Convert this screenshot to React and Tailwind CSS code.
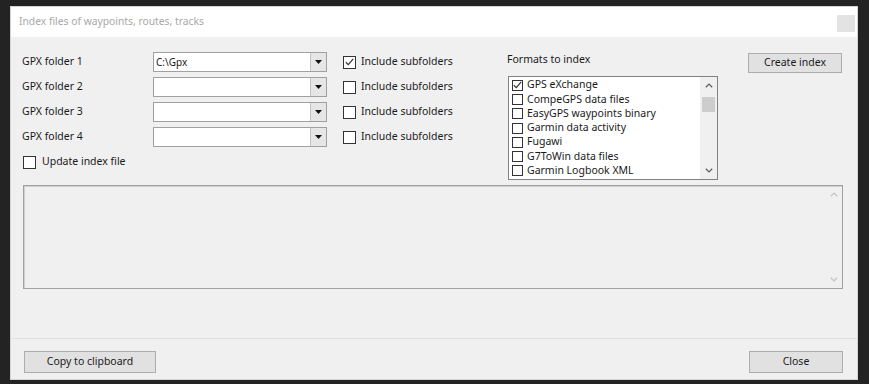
const formats = [
  { name: 'GPS eXchange', checked: true },
  { name: 'CompeGPS data files' },
  { name: 'EasyGPS waypoints binary' },
  { name: 'Garmin data activity' },
  { name: 'Fugawi' },
  { name: 'G7ToWin data files' },
  { name: 'Garmin Logbook XML' },
];

const CheckBox = ({ checked, size = 'w-[13px] h-[13px]' }) => (
  <span className={`${size} shrink-0 border border-[#333333] bg-white flex items-center justify-center`}>
    {checked && (
      <svg width="9" height="8" viewBox="0 0 9 8">
        <path d="M0.8 4.2 L3.3 6.6 L8.2 0.9" fill="none" stroke="#333333" strokeWidth="1.2" />
      </svg>
    )}
  </span>
);

const Chevron = ({ up = true, color = '#606060' }) => (
  <svg width="8" height="5" viewBox="0 0 8 5">
    <path d={up ? 'M0.8 4.3 L4 1.1 L7.2 4.3' : 'M0.8 0.7 L4 3.9 L7.2 0.7'} fill="none" stroke={color} strokeWidth="1.3" />
  </svg>
);

const Combo = ({ value }) => (
  <div className="flex h-[20px] w-[174px] border border-[#a0a0a0] bg-white">
    <div className="flex-1 flex items-center px-[2px] text-[10px]">{value}</div>
    <div className="w-[16px] border-l border-[#c4c4c4] bg-[#e6e6e6] flex items-center justify-center">
      <svg width="7" height="4" viewBox="0 0 7 4">
        <path d="M0 0 H7 L3.5 4 Z" fill="#111111" />
      </svg>
    </div>
  </div>
);

const Button = ({ children, width }) => (
  <div className={`${width} h-full border border-[#adadad] bg-[#e1e1e1] flex items-center justify-center text-[#1a1a1a]`}>
    {children}
  </div>
);

const App = () => {
  return (
    <div className="w-[869px] h-[384px] bg-[#232323] pt-[6px] pl-[10px] pr-[11px] pb-[4px] font-['Noto_Sans',sans-serif] text-[10.5px] text-[#1a1a1a]">
      <div className="h-full flex flex-col border border-[#d4d4d4] bg-white">
        {/* Title bar */}
        <div className="h-[30px] flex items-start justify-between pl-[8px] pr-[2px]">
          <span className="mt-[7px] text-[10.3px] text-[#a8a8a8]">Index files of waypoints, routes, tracks</span>
          <span className="mt-[8px] w-[18px] h-[17px] bg-[#e3e3e3]" />
        </div>

        {/* Body */}
        <div className="flex-1 flex flex-col bg-[#f0f0f0]">
          <div className="flex pt-[15px] pl-[11px]">
            {/* Folders */}
            <div className="w-[305px] flex flex-col gap-[5px]">
              {['C:\\Gpx', '', '', ''].map((v, i) => (
                <div key={i} className="h-[20px] flex items-center">
                  <span className="w-[131px]">GPX folder {i + 1}</span>
                  <Combo value={v} />
                </div>
              ))}
              <div className="h-[16px] mt-[2px] flex items-center gap-[6px] pl-[1px]">
                <CheckBox />
                <span>Update index file</span>
              </div>
            </div>

            {/* Include subfolders */}
            <div className="w-[164px] ml-[16px] flex flex-col gap-[5px]">
              {[true, false, false, false].map((c, i) => (
                <div key={i} className="h-[20px] flex items-center gap-[5px]">
                  <CheckBox checked={c} />
                  <span>Include subfolders</span>
                </div>
              ))}
            </div>

            {/* Formats */}
            <div className="flex flex-col">
              <span className="h-[16px] flex items-center">Formats to index</span>
              <div className="mt-[8px] ml-[1px] w-[210px] h-[104px] flex border border-[#828282] bg-white">
                <div className="flex-1 pt-[1px] pl-[3px]">
                  {formats.map((f) => (
                    <div key={f.name} className="h-[14.3px] flex items-center gap-[4px]">
                      <CheckBox checked={f.checked} size="w-[11px] h-[11px]" />
                      <span>{f.name}</span>
                    </div>
                  ))}
                </div>
                <div className="w-[17px] flex flex-col bg-[#f0f0f0]">
                  <div className="h-[17px] flex items-center justify-center">
                    <Chevron up />
                  </div>
                  <div className="mt-[3px] mx-[2px] h-[15px] bg-[#cdcdcd]" />
                  <div className="flex-1" />
                  <div className="h-[17px] flex items-center justify-center">
                    <Chevron up={false} />
                  </div>
                </div>
              </div>
            </div>

            {/* Create index */}
            <div className="ml-[30px] mt-[1px] h-[20px]">
              <Button width="w-[94px]">Create index</Button>
            </div>
          </div>

          {/* Output area */}
          <div className="mt-[5px] ml-[12px] w-[820px] h-[104px] flex justify-end border border-[#a0a0a0] shadow-[inset_1px_1px_0_#d0d0d0]">
            <div className="w-[17px] flex flex-col justify-between py-[6px] items-center">
              <Chevron up color="#c4c4c4" />
              <Chevron up={false} color="#c4c4c4" />
            </div>
          </div>

          <div className="flex-1" />

          {/* Footer */}
          <div className="border-t border-[#dfdfdf] pt-[12px] pb-[6px] pl-[13px] pr-[14px] flex justify-between">
            <div className="h-[22px]">
              <Button width="w-[132px]">Copy to clipboard</Button>
            </div>
            <div className="h-[22px]">
              <Button width="w-[94px]">Close</Button>
            </div>
          </div>
        </div>
      </div>
    </div>
  );
};

export default App;
